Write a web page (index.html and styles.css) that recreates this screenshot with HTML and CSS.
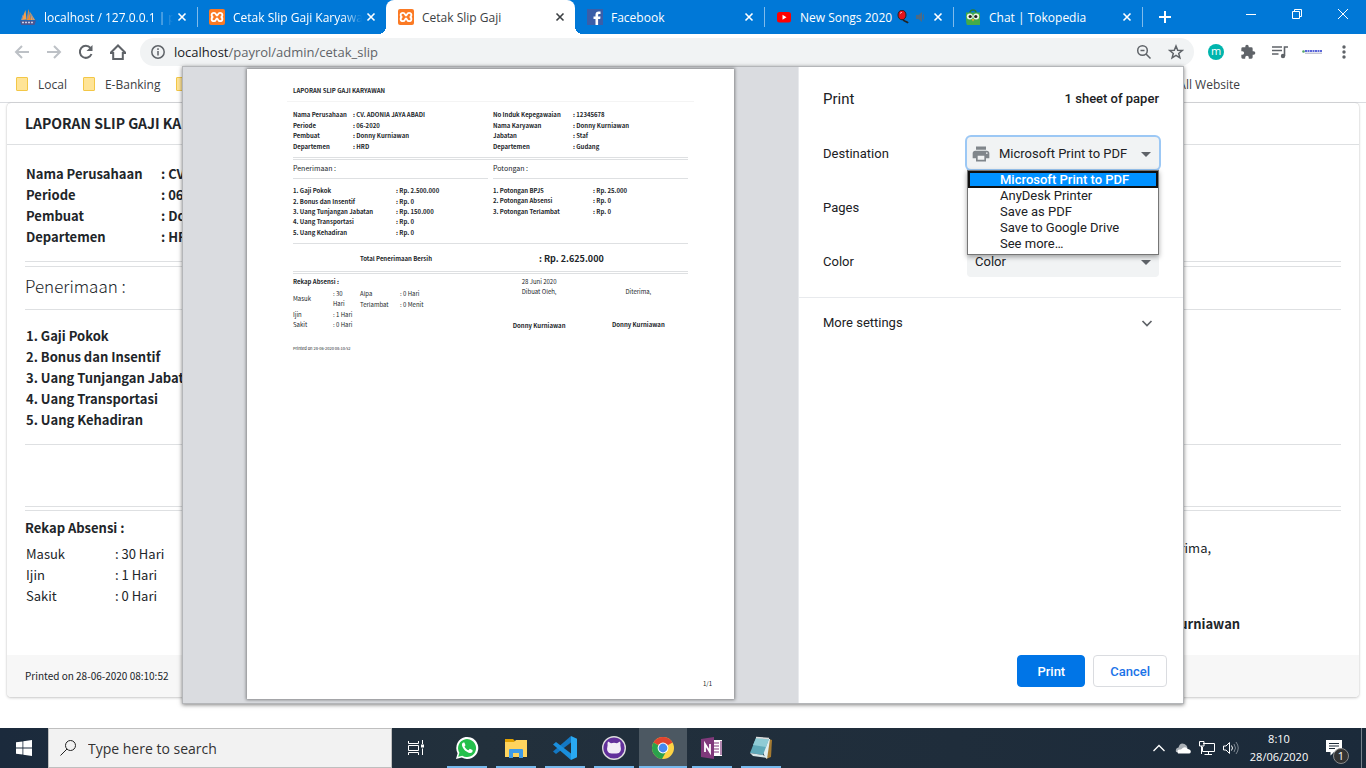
FILE: index.html
```
<!DOCTYPE html>
<html lang="id">
<head>
    <meta charset="UTF-8">
    <meta name="viewport" content="width=device-width, initial-scale=1.0">
    <title>Cetak Slip Gaji</title>
    <link rel="stylesheet" href="styles.css">
</head>
<body>
    <!-- Tabs -->
    <header class="tabstrip">
        <div class="tab">
            <svg class="favicon" viewBox="0 0 16 16"><path d="M5.500 1 L1.500 11 L6.500 10.500 Z" fill="#f7a04b"/><path d="M8.500 0 L6.500 11 L11 11 Z" fill="#f08b2c"/><path d="M10 3 L11 11 L15 11 Z" fill="#f7a04b"/><path d="M3 6 L1.500 11 M9 3 L7.500 10 M11.500 6 L13 11" stroke="#8b8fa8"/><path d="M0 11.500 H16 L14.500 16 H1 Z" fill="#4a5692"/><path d="M2 13.500 H14" stroke="#c8cde8" stroke-width="1.500" stroke-dasharray="2 1"/></svg>
            <span class="tab-title faded">localhost / 127.0.0.1 | phpMyAdmin</span>
            <button class="tab-close" aria-label="Close tab"><svg viewBox="0 0 10 10"><path d="M1.500 1.500 8.500 8.500M8.500 1.500 1.500 8.500"/></svg></button>
        </div>
        <div class="tab no-line">
            <svg class="favicon" viewBox="0 0 16 16"><rect width="16" height="16" rx="2" fill="#fb7a24"/><path d="M5 3.800C2 3.800 2 7.500 4.200 8 2 8.500 2 12.200 5 12.200 7.200 12.200 6.800 9.500 8 9.500S8.800 12.200 11 12.200C14 12.200 14 8.500 11.800 8 14 7.500 14 3.800 11 3.800 8.800 3.800 9.200 6.500 8 6.500S7.200 3.800 5 3.800Z" fill="none" stroke="#fff" stroke-width="1.800"/></svg>
            <span class="tab-title faded">Cetak Slip Gaji Karyawan</span>
            <button class="tab-close" aria-label="Close tab"><svg viewBox="0 0 10 10"><path d="M1.500 1.500 8.500 8.500M8.500 1.500 1.500 8.500"/></svg></button>
        </div>
        <div class="tab active no-line">
            <svg class="favicon" viewBox="0 0 16 16"><rect width="16" height="16" rx="2" fill="#fb7a24"/><path d="M5 3.800C2 3.800 2 7.500 4.200 8 2 8.500 2 12.200 5 12.200 7.200 12.200 6.800 9.500 8 9.500S8.800 12.200 11 12.200C14 12.200 14 8.500 11.800 8 14 7.500 14 3.800 11 3.800 8.800 3.800 9.200 6.500 8 6.500S7.200 3.800 5 3.800Z" fill="none" stroke="#fff" stroke-width="1.800"/></svg>
            <span class="tab-title">Cetak Slip Gaji</span>
            <button class="tab-close" aria-label="Close tab"><svg viewBox="0 0 10 10"><path d="M1.500 1.500 8.500 8.500M8.500 1.500 1.500 8.500"/></svg></button>
        </div>
        <div class="tab">
            <svg class="favicon" viewBox="0 0 16 16"><rect width="16" height="16" fill="#3b5ea8"/><path d="M8.500 16V10H6.500V7.500H8.500V5.800C8.500 3.500 9.800 2.500 11.700 2.500H13.500V4.900H12.300C11.300 4.900 11.100 5.300 11.100 6.100V7.500H13.500L13.200 10H11.100V16Z" fill="#fff"/></svg>
            <span class="tab-title">Facebook</span>
            <button class="tab-close" aria-label="Close tab"><svg viewBox="0 0 10 10"><path d="M1.500 1.500 8.500 8.500M8.500 1.500 1.500 8.500"/></svg></button>
        </div>
        <div class="tab">
            <svg class="favicon" viewBox="0 0 16 16"><rect x="1" y="3" width="14" height="10.500" rx="2.500" fill="#f00"/><path d="M6.500 5.800V10.700L10.500 8.200Z" fill="#fff"/></svg>
            <span class="tab-title">New Songs 2020
                <svg class="title-emoji" viewBox="0 0 14 14"><path d="M7 9C8 13 10 10 12 13" fill="none" stroke="#222" stroke-width="1.800"/><ellipse cx="6" cy="5" rx="4" ry="4.800" fill="#e3141c" stroke="#222"/><path d="M4.500 3.500 L5.500 2" stroke="#fff"/></svg>
                <svg class="title-emoji speaker" viewBox="0 0 14 14"><path d="M2 5H4.500L8 2V12L4.500 9H2Z" fill="#4d6a84"/><path d="M9.500 4.500V9.500M11.500 3.500V10.500" stroke="#4d6a84"/></svg>
            </span>
            <button class="tab-close" aria-label="Close tab"><svg viewBox="0 0 10 10"><path d="M1.500 1.500 8.500 8.500M8.500 1.500 1.500 8.500"/></svg></button>
        </div>
        <div class="tab">
            <svg class="favicon" viewBox="0 0 16 16"><path d="M5 4C5 0 11 0 11 4" fill="none" stroke="#287c37" stroke-width="1.500"/><path d="M1 3.500H15V16H2C1 14 1 12 1 3.500Z" fill="#43ab48"/><circle cx="4.800" cy="7.500" r="3" fill="#e9f4e5"/><circle cx="11.200" cy="7.500" r="3" fill="#e9f4e5"/><circle cx="5.200" cy="7.500" r="1.600" fill="#222"/><circle cx="10.800" cy="7.500" r="1.600" fill="#222"/><path d="M6.500 10H9.500L8 12.500Z" fill="#f5a623"/></svg>
            <span class="tab-title">Chat | Tokopedia</span>
            <button class="tab-close" aria-label="Close tab"><svg viewBox="0 0 10 10"><path d="M1.500 1.500 8.500 8.500M8.500 1.500 1.500 8.500"/></svg></button>
        </div>
        <button class="new-tab" aria-label="New tab"><svg viewBox="0 0 12 12"><path d="M6 0V12M0 6H12" stroke="#fff" stroke-width="2"/></svg></button>
        <div class="window-buttons">
            <button aria-label="Minimize"><svg viewBox="0 0 12 12"><path d="M1 6.500H11"/></svg></button>
            <button aria-label="Restore"><svg viewBox="0 0 12 12"><path d="M1.500 3.500H8.500V10.500H1.500ZM3.500 3.500V1.500H10.500V8.500H8.500"/></svg></button>
            <button aria-label="Close"><svg viewBox="0 0 12 12"><path d="M1 1 11 11M11 1 1 11"/></svg></button>
        </div>
    </header>

    <nav class="toolbar">
        <button class="nav-btn disabled" aria-label="Back"><svg viewBox="0 0 16 16"><path d="M15 8H2M8 2 2 8 8 14"/></svg></button>
        <button class="nav-btn disabled" aria-label="Forward"><svg viewBox="0 0 16 16"><path d="M1 8H14M8 2 14 8 8 14"/></svg></button>
        <button class="nav-btn" aria-label="Reload"><svg viewBox="0 0 16 16"><path d="M13.500 10A6 6 0 1 1 12.500 4"/><path d="M14.500 1V7H8.500Z" fill="#5f6368" stroke="none"/></svg></button>
        <button class="nav-btn" aria-label="Home"><svg viewBox="0 0 16 16"><path d="M0.500 9 8 1.500 15.500 9H12.800V15H3.200V9Z"/></svg></button>
        <div class="omnibox">
            <svg class="small-icon" viewBox="0 0 16 16"><circle cx="8" cy="8" r="6.200"/><path d="M8 7V11.500M8 4.300V6"/></svg>
            <div class="url"><span class="host">localhost</span>/payrol/admin/cetak_slip</div>
            <button class="icon-btn" aria-label="Zoom"><svg class="small-icon" viewBox="0 0 16 16"><circle cx="6.500" cy="6.500" r="4.800"/><path d="M10 10 14.500 14.500M4.500 6.500H8.500"/></svg></button>
            <button class="icon-btn" aria-label="Bookmark this page"><svg class="small-icon" viewBox="0 0 16 16"><path d="M8 2 9.700 6.200 14.200 6.500 10.700 9.400 11.900 13.800 8 11.400 4.100 13.800 5.300 9.400 1.800 6.500 6.300 6.200Z"/></svg></button>
        </div>
        <div class="extensions">
            <button class="ext" aria-label="Mercury"><span class="avatar">m</span></button>
            <button class="ext" aria-label="Extensions"><svg viewBox="0 0 24 24"><path fill="#5f6368" d="M20.500 11H19V7a2 2 0 0 0-2-2h-4V3.500a2.500 2.500 0 0 0-5 0V5H4a2 2 0 0 0-2 2v3.800h1.500a2.700 2.700 0 0 1 0 5.400H2V20a2 2 0 0 0 2 2h3.800v-1.500a2.700 2.700 0 0 1 5.400 0V22H17a2 2 0 0 0 2-2v-4h1.500a2.500 2.500 0 0 0 0-5z"/></svg></button>
            <button class="ext" aria-label="Media controls"><svg viewBox="0 0 16 16"><path d="M0 3H10M0 6.500H10M0 10H6.500M12.500 12V3H16" fill="none" stroke="#5f6368" stroke-width="1.600"/><circle cx="11" cy="12" r="2.200" fill="#5f6368"/></svg></button>
            <button class="ext wide" aria-label="Profile"><svg viewBox="0 0 20 6"><path d="M3 2H20" stroke="#5a66d8" stroke-width="2" stroke-dasharray="2 0.500"/><path d="M3 4.200H20" stroke="#a9abc2"/><circle cx="1.500" cy="2.500" r="1.300" fill="#57a66a"/></svg></button>
            <button class="ext" aria-label="Menu"><svg viewBox="0 0 16 16"><g fill="#5f6368"><circle cx="8" cy="3" r="1.700"/><circle cx="8" cy="8" r="1.700"/><circle cx="8" cy="13" r="1.700"/></g></svg></button>
        </div>
    </nav>

    <nav class="bookmarks">
        <a href="#"><span class="folder"></span>Local</a>
        <a href="#"><span class="folder"></span>E-Banking</a>
        <a href="#"><span class="folder"></span></a>
        <a href="#" class="last">All Website</a>
    </nav>

    <!-- Payslip page -->
    <main class="page">
        <section class="card">
            <h1 class="card-header">LAPORAN SLIP GAJI KARYAWAN</h1>
            <div class="card-body">
                <table class="info">
                    <tr><th>Nama Perusahaan</th><td>: CV. ADONIA JAYA ABADI</td></tr>
                    <tr><th>Periode</th><td>: 06-2020</td></tr>
                    <tr><th>Pembuat</th><td>: Donny Kurniawan</td></tr>
                    <tr><th>Departemen</th><td>: HRD</td></tr>
                </table>
                <div class="double-line"></div>
                <h2>Penerimaan :</h2>
                <ol class="items">
                    <li>Gaji Pokok</li>
                    <li>Bonus dan Insentif</li>
                    <li>Uang Tunjangan Jabatan</li>
                    <li>Uang Transportasi</li>
                    <li>Uang Kehadiran</li>
                </ol>
                <div class="total-row"></div>
                <div class="recap">
                    <div>
                        <h3>Rekap Absensi :</h3>
                        <table class="attendance">
                            <tr><td>Masuk</td><td>: 30 Hari</td></tr>
                            <tr><td>Ijin</td><td>: 1 Hari</td></tr>
                            <tr><td>Sakit</td><td>: 0 Hari</td></tr>
                        </table>
                    </div>
                    <div class="receiver">
                        <span>Diterima,</span>
                        <b>Donny Kurniawan</b>
                    </div>
                </div>
            </div>
            <footer class="card-footer">Printed on 28-06-2020 08:10:52</footer>
        </section>
    </main>

    <!-- Print dialog -->
    <div class="overlay">
        <div class="dialog" role="dialog" aria-label="Print">
            <div class="preview">
                <article class="paper">
                    <h2 class="paper-title">LAPORAN SLIP GAJI KARYAWAN</h2>
                    <div class="paper-body">
                        <div class="halves">
                            <table class="rows four">
                                <tr><th>Nama Perusahaan</th><td>: CV. ADONIA JAYA ABADI</td></tr>
                                <tr><th>Periode</th><td>: 06-2020</td></tr>
                                <tr><th>Pembuat</th><td>: Donny Kurniawan</td></tr>
                                <tr><th>Departemen</th><td>: HRD</td></tr>
                            </table>
                            <table class="rows four employee">
                                <tr><th>No Induk Kepegawaian</th><td>: 12345678</td></tr>
                                <tr><th>Nama Karyawan</th><td>: Donny Kurniawan</td></tr>
                                <tr><th>Jabatan</th><td>: Staf</td></tr>
                                <tr><th>Departemen</th><td>: Gudang</td></tr>
                            </table>
                        </div>
                        <div class="paper-double"></div>
                        <div class="halves amounts">
                            <div>
                                <h3>Penerimaan :</h3>
                                <table class="rows five income">
                                    <tr><th>1. Gaji Pokok</th><td>: Rp. 2.500.000</td></tr>
                                    <tr><th>2. Bonus dan Insentif</th><td>: Rp. 0</td></tr>
                                    <tr><th>3. Uang Tunjangan Jabatan</th><td>: Rp. 150.000</td></tr>
                                    <tr><th>4. Uang Transportasi</th><td>: Rp. 0</td></tr>
                                    <tr><th>5. Uang Kehadiran</th><td>: Rp. 0</td></tr>
                                </table>
                            </div>
                            <div>
                                <h3>Potongan :</h3>
                                <table class="rows three cuts">
                                    <tr><th>1. Potongan BPJS</th><td>: Rp. 25.000</td></tr>
                                    <tr><th>2. Potongan Absensi</th><td>: Rp. 0</td></tr>
                                    <tr><th>3. Potongan Terlambat</th><td>: Rp. 0</td></tr>
                                </table>
                            </div>
                        </div>
                        <div class="paper-total">
                            <b>Total Penerimaan Bersih</b>
                            <strong>: Rp. 2.625.000</strong>
                        </div>
                        <div class="paper-double"></div>
                        <div class="paper-recap">
                            <div class="absence">
                                <h4>Rekap Absensi :</h4>
                                <div class="absence-tables">
                                    <table>
                                        <tr><td>Masuk</td><td>: 30<br>Hari</td></tr>
                                        <tr><td>Ijin</td><td>: 1 Hari</td></tr>
                                        <tr><td>Sakit</td><td>: 0 Hari</td></tr>
                                    </table>
                                    <table>
                                        <tr><td>Alpa</td><td>: 0 Hari</td></tr>
                                        <tr><td>Terlambat</td><td>: 0 Menit</td></tr>
                                    </table>
                                </div>
                            </div>
                            <div class="sign"><span>28 Juni 2020<br>Dibuat Oleh,</span><b>Donny Kurniawan</b></div>
                            <div class="sign second"><span>Diterima,</span><b>Donny Kurniawan</b></div>
                        </div>
                        <p class="printed">Printed on 28-06-2020 08:10:52</p>
                    </div>
                    <span class="page-number">1/1</span>
                </article>
            </div>

            <form class="settings">
                <div class="settings-head">
                    <h2>Print</h2>
                    <span>1 sheet of paper</span>
                </div>
                <div class="setting">
                    <label for="destination">Destination</label>
                    <div class="select-box focused">
                        <svg class="printer" viewBox="0 0 24 24"><path fill="#80868b" d="M19 8H5c-1.660 0-3 1.340-3 3v6h4v4h12v-4h4v-6c0-1.660-1.340-3-3-3zm-3 11H8v-5h8v5zm3-7c-.550 0-1-.450-1-1s.450-1 1-1 1 .450 1 1-.450 1-1 1zM18 3H6v4h12V3z"/></svg>
                        <select id="destination" class="with-icon">
                            <option>Microsoft Print to PDF</option>
                        </select>
                        <ul class="menu" role="listbox">
                            <li class="selected" role="option">Microsoft Print to PDF</li>
                            <li role="option">AnyDesk Printer</li>
                            <li role="option">Save as PDF</li>
                            <li role="option">Save to Google Drive</li>
                            <li role="option">See more…</li>
                        </ul>
                    </div>
                </div>
                <div class="setting">
                    <label for="pages">Pages</label>
                    <div class="select-box"><select id="pages"><option>All</option></select></div>
                </div>
                <div class="setting">
                    <label for="color">Color</label>
                    <div class="select-box"><select id="color"><option>Color</option></select></div>
                </div>
                <button type="button" class="more">More settings
                    <svg viewBox="0 0 12 12"><path d="M1.500 4 6 8.500 10.500 4" fill="none" stroke="#5f6368" stroke-width="1.700"/></svg>
                </button>
                <div class="actions">
                    <button type="button" class="btn primary">Print</button>
                    <button type="button" class="btn">Cancel</button>
                </div>
            </form>
        </div>
    </div>

    <!-- Windows taskbar -->
    <footer class="taskbar">
        <button class="start" aria-label="Start"><svg viewBox="0 0 16 16"><path fill="#fff" d="M0 2.300 6.500 1.400V7.600H0ZM7.300 1.300 16 0V7.600H7.300ZM0 8.400H6.500V14.600L0 13.700ZM7.300 8.400H16V16L7.300 14.700Z"/></svg></button>
        <label class="search">
            <svg viewBox="0 0 16 16"><circle cx="10.500" cy="5.500" r="5"/><path d="M7 9 0.500 15.500"/></svg>
            <input type="text" placeholder="Type here to search">
        </label>
        <button class="task-view" aria-label="Task view"><svg viewBox="0 0 16 16"><path d="M0.500 1V3.500H10.500V1M0.500 15V12.500H10.500V15M0.500 5.500H10.500V10.500H0.500ZM14.500 0V4M14.500 8.500V15" fill="none" stroke="#fff"/><path d="M13 4.500H16V7.500H13Z" fill="#fff"/></svg></button>
        <div class="apps">
            <button class="app" aria-label="WhatsApp"><svg viewBox="0 0 24 24"><path d="M1 23 2.600 17.200A11 11 0 1 1 6.800 21.500Z" fill="#fff"/><path d="M3.200 20.800 4.400 16.800A9 9 0 1 1 7.300 19.700Z" fill="#25c04c"/><path fill="#fff" d="M8.500 6.500c-.6 0-2 1-1.500 3 .8 3.500 4.500 7 8 7.500 2 0 3-1.300 2.500-3l-2.700-1.300-1.300 1.500c-1.900-.7-3.200-2-4-3.800l1-1.200-1.100-2.700z"/></svg></button>
            <button class="app" aria-label="File Explorer"><svg viewBox="0 0 24 24"><path d="M1 3H9L11 5V8H1Z" fill="#e2a100"/><path d="M1 6H10L12 4H23V21H1Z" fill="#ffd45e"/><path d="M5 22V14Q5 13 6 13H18Q19 13 19 14V22H15V17H9V22Z" fill="#3f9be8"/></svg></button>
            <button class="app" aria-label="Visual Studio Code"><svg viewBox="0 0 24 24"><path d="M18 0 24 2.800V21.200L18 24Z" fill="#29a9f2"/><path d="M18 0V6.500L3 18 0 15.500Z" fill="#1378c4"/><path d="M0 8.500 3 6 18 17.500V24Z" fill="#1a8fdd"/></svg></button>
            <button class="app" aria-label="GitHub Desktop"><svg viewBox="0 0 24 24"><circle cx="12" cy="12" r="11.300" fill="#62309b" stroke="#ddd" stroke-width="1.400"/><path fill="#f2edf7" d="M6 5.500 9 7.200Q12 6.500 15 7.200L18 5.500Q18.800 7.500 18.400 9.200 20.500 17.500 14.500 17.500H9.500Q3.500 17.500 5.600 9.200 5.200 7.500 6 5.500Z"/></svg></button>
            <button class="app current" aria-label="Google Chrome"><svg viewBox="0 0 24 24"><circle cx="12" cy="12" r="11" fill="#fdd344"/><path d="M12 12 2.470 6.500A11 11 0 0 1 21.530 6.500Z" fill="#e0432f"/><path d="M12 6.500H21.500L17 7Z" fill="#e0432f"/><path d="M12 12 2.470 6.500A11 11 0 0 0 11 23L16 14Z" fill="#2ba24c"/><circle cx="12" cy="12" r="5.400" fill="#fff"/><circle cx="12" cy="12" r="4.400" fill="#4688f1"/></svg></button>
            <button class="app" aria-label="OneNote"><svg viewBox="0 0 24 24"><path d="M12 4H22V20H12Z" fill="#fff"/><path d="M14 7H19M14 10H19M14 13H19M14 16H19M21 5V19" stroke="#80397b" stroke-width="1.200"/><path d="M1 3 14 1V23L1 21Z" fill="#80397b"/><path d="M5 16V8L10 16V8" fill="none" stroke="#fff" stroke-width="1.800"/></svg></button>
            <button class="app" aria-label="Notepad"><svg viewBox="0 0 24 24"><path d="M20 3 23 4 22 21 17 23Z" fill="#a57b32"/><path d="M8 2 21 3 18 23 16 21Z" fill="#e2eef0"/><path d="M7 2 20 3 14 19 1 17Z" fill="#5fa9b9"/><path d="M7 2 20 3 17 11 4 9Z" fill="#8fcbd5"/><path d="M1 17 14 19 19 22 4 20Z" fill="#d8e6e8"/><path d="M7 1.500 20 2.500" stroke="#ddd" stroke-width="1.500"/></svg></button>
        </div>
        <div class="tray">
            <svg viewBox="0 0 16 16"><path d="M2.500 11 8 5.500 13.500 11" fill="none" stroke="#fff" stroke-width="1.300"/></svg>
            <svg viewBox="0 0 16 16"><path d="M1 12Q0 8 3.500 7.500 5 2 9.500 4 12 5 12.500 7.500L6 13Z" fill="#aab0b6"/><path d="M3 13.500Q1 9 6 9.500 10 5.500 13 9 16 9.500 15.800 12 15.500 13.500 14 13.500Z" fill="#fff"/></svg>
            <svg viewBox="0 0 16 16"><path d="M4 3.500H15.500V11.500H3.500V7M9.500 11.500V14.500M5.500 14.500H13M0.500 1.500H5V6H0.500ZM2.500 6V14" fill="none" stroke="#fff"/></svg>
            <svg viewBox="0 0 16 16"><path d="M0.500 6V10H3L6.500 13.500V2.500L3 6Z" fill="none" stroke="#fff"/><path d="M8.500 5.500Q10.500 8 8.500 10.500" fill="none" stroke="#fff"/><path d="M11 4Q14 8 11 12M13 2Q17.500 8 13 14" fill="none" stroke="#7d8791"/></svg>
        </div>
        <div class="clock"><span>8:10</span><span>28/06/2020</span></div>
        <button class="notify" aria-label="Notifications">
            <svg viewBox="0 0 16 16"><path d="M0 0H16V12H8L4.500 15.500V12H0Z" fill="#fff"/><path d="M3 3.500H13M3 6H13M3 8.500H9" stroke="#1d2b38"/></svg>
            <span class="badge">1</span>
        </button>
    </footer>
</body>
</html>
```
FILE: styles.css
```
:root {
    --chrome-blue: #0078d7;
    --icon-gray: #5f6368;
    --line: #dee0e2;
    --text: #212529;
    --ui-font: "Open Sans", "Noto Sans", sans-serif;
    --slip-font: "Noto Sans CJK SC", "Open Sans", sans-serif;
    --dialog-font: Roboto, "Liberation Sans", sans-serif;
}

* {
    box-sizing: border-box;
}

body {
    margin: 0;
    height: 100vh;
    display: flex;
    flex-direction: column;
    overflow: hidden;
    position: relative;
    background: #fff;
    color: var(--text);
    font-family: var(--ui-font);
    font-size: 12px;
}

button {
    border: none;
    background: none;
    padding: 0;
    font-family: inherit;
    cursor: pointer;
}

h1, h2, h3, h4, p, ul, ol {
    margin: 0;
    padding: 0;
}

svg {
    display: block;
    flex: none;
}

table {
    border-collapse: collapse;
}

th, td {
    padding: 0;
    text-align: left;
    white-space: nowrap;
}

/* Tabs */
.tabstrip {
    display: flex;
    flex: none;
    height: 34px;
    padding-left: 8px;
    background: var(--chrome-blue);
    color: #fff;
}

.tab {
    display: flex;
    align-items: center;
    flex: 0 1 189px;
    min-width: 0;
    gap: 8px;
    padding: 0 10px 0 12px;
    position: relative;
}

.tab::after {
    content: "";
    position: absolute;
    right: -1px;
    top: 7px;
    width: 1px;
    height: 20px;
    background: #80bbeb;
}

.tab.no-line::after {
    display: none;
}

.tab.active {
    background: #fff;
    color: #3c4043;
    border-radius: 8px 8px 0 0;
}

.tab.active::before,
.tab.active::after {
    content: "";
    display: block;
    position: absolute;
    top: auto;
    bottom: 0;
    width: 8px;
    height: 8px;
}

.tab.active::before {
    left: -8px;
    background: radial-gradient(circle at 0 0, var(--chrome-blue) 8px, #fff 8px);
}

.tab.active::after {
    right: -8px;
    background: radial-gradient(circle at 100% 0, var(--chrome-blue) 8px, #fff 8px);
}

.favicon {
    width: 16px;
    height: 16px;
}

.tab-title {
    display: flex;
    align-items: center;
    flex: 1;
    min-width: 0;
    overflow: hidden;
    white-space: nowrap;
}

.tab-title.faded {
    display: block;
    margin-right: -4px;
    -webkit-mask-image: linear-gradient(to right, #000 85%, transparent);
    mask-image: linear-gradient(to right, #000 85%, transparent);
}

.title-emoji {
    width: 14px;
    height: 14px;
    margin-left: 4px;
}

.tab-close {
    color: inherit;
}

.tab-close svg {
    width: 10px;
    height: 10px;
    stroke: currentColor;
    stroke-width: 1.6;
}

.new-tab {
    width: 46px;
    display: flex;
    align-items: center;
    justify-content: center;
}

.new-tab svg {
    width: 12px;
    height: 12px;
}

.window-buttons {
    display: flex;
    margin-left: auto;
}

.window-buttons button {
    width: 46px;
    height: 28px;
    display: flex;
    align-items: center;
    justify-content: center;
}

.window-buttons svg {
    width: 12px;
    height: 12px;
    fill: none;
    stroke: #fff;
}

/* Address bar */
.toolbar {
    display: flex;
    align-items: center;
    flex: none;
    height: 36px;
    padding: 0 14px;
}

.nav-btn {
    width: 32px;
    display: flex;
}

.nav-btn svg {
    width: 16px;
    height: 16px;
    fill: none;
    stroke: var(--icon-gray);
    stroke-width: 2;
}

.nav-btn.disabled svg {
    stroke: #bdc1c6;
}

.omnibox {
    flex: 1;
    display: flex;
    align-items: center;
    gap: 8px;
    height: 28px;
    padding: 0 10px;
    margin-left: -2px;
    border-radius: 14px;
    background: #f1f3f4;
}

.small-icon {
    width: 16px;
    height: 16px;
    fill: none;
    stroke: var(--icon-gray);
    stroke-width: 1.5;
}

.url {
    flex: 1;
    color: #5f6368;
    font-size: 13px;
}

.host {
    color: #202124;
}

.icon-btn + .icon-btn {
    margin-left: 8px;
}

.extensions {
    display: flex;
    gap: 16px;
    margin-left: 14px;
}

.ext {
    width: 16px;
    height: 16px;
    display: flex;
    align-items: center;
    justify-content: center;
}

.ext svg {
    width: 16px;
    height: 16px;
}

.ext.wide svg {
    width: 20px;
    height: 6px;
}

.avatar {
    flex: none;
    width: 16px;
    height: 16px;
    border-radius: 50%;
    background: #00b5ad;
    color: #fff;
    font-size: 11px;
    line-height: 14px;
}

/* Bookmarks */
.bookmarks {
    display: flex;
    flex: none;
    gap: 16px;
    height: 33px;
    padding: 0 126px 4px 16px;
    border-bottom: 1px solid #dadce0;
}

.bookmarks a {
    display: flex;
    align-items: center;
    gap: 10px;
    color: #3c4043;
    text-decoration: none;
}

.bookmarks .last {
    margin-left: auto;
}

.folder {
    width: 12px;
    height: 14px;
    border: 1px solid #f3c747;
    border-radius: 1px;
    background: #ffe497;
}

/* Payslip page */
.page {
    flex: 1;
    min-height: 0;
    padding: 0 7px 31px;
    font-family: var(--slip-font);
    font-size: 13px;
    line-height: 21px;
}

.card {
    display: flex;
    flex-direction: column;
    height: 100%;
    border-radius: 4px;
    box-shadow: 0 0 1px rgba(0, 0, 0, 0.25), 0 1px 3px rgba(0, 0, 0, 0.2);
    overflow: hidden;
}

.card-header {
    flex: none;
    height: 42px;
    padding: 0 18px;
    border-bottom: 1px solid var(--line);
    font-size: 14px;
    font-weight: bold;
    line-height: 40px;
}

.card-body {
    flex: 1;
    padding: 18px 18px 0;
}

.info {
    margin-left: 1px;
}

.info th {
    width: 135px;
}

.info td {
    font-weight: bold;
}

.double-line {
    height: 6px;
    margin-top: 14px;
    border: 1px solid var(--line);
    border-width: 1px 0;
}

.card h2 {
    height: 43px;
    padding-top: 8px;
    border-bottom: 1px solid var(--line);
    font-size: 17px;
    font-weight: 300;
}

.items {
    height: 135px;
    padding: 15px 0 0 1px;
    border-bottom: 1px solid var(--line);
    counter-reset: item;
    list-style: none;
    font-weight: bold;
}

.items li::before {
    counter-increment: item;
    content: counter(item) ". ";
}

.total-row {
    height: 66px;
    border-bottom: 1px solid var(--line);
    background: linear-gradient(var(--line), var(--line)) 0 61px / 100% 1px no-repeat;
}

.recap {
    display: flex;
    justify-content: space-between;
    padding-top: 6px;
}

.card h3 {
    margin-bottom: 5px;
    font-size: 13px;
}

.attendance {
    margin-left: 1px;
}

.attendance td:first-child {
    width: 89px;
}

.receiver {
    width: 24%;
    display: flex;
    flex-direction: column;
    align-items: center;
    justify-content: space-between;
    height: 97px;
    margin-top: 20px;
}

.card-footer {
    flex: none;
    height: 42px;
    padding: 0 18px;
    background: #f7f7f7;
    font-size: 10px;
    line-height: 42px;
}

/* Print dialog */
.overlay {
    position: absolute;
    inset: 66px 0 64px;
    display: flex;
    justify-content: center;
}

.dialog {
    display: flex;
    width: 100%;
    max-width: 1002px;
    border: 1px solid #b4b6b9;
    background: #fff;
    box-shadow: 0 1px 4px rgba(0, 0, 0, 0.5);
}

.preview {
    flex: 1;
    display: flex;
    justify-content: center;
    padding: 2px 0 4px;
    background: #dadce0;
    border-right: 1px solid #e8eaed;
}

.paper {
    display: flex;
    flex-direction: column;
    width: 487px;
    padding: 17px 40px 10px;
    background: #fff;
    box-shadow: 0 0 3px 1px rgba(0, 0, 0, 0.4);
    font-family: var(--slip-font);
    font-size: 6px;
    line-height: 10px;
}

.paper-title {
    height: 16px;
    padding-left: 6px;
    border-bottom: 1px solid #f4f4f4;
    font-size: 6px;
}

.paper-body {
    flex: 1;
    padding: 8px 6px 0;
}

.halves {
    display: grid;
    grid-template-columns: 1fr 1fr;
    column-gap: 5px;
    align-items: start;
}

.rows td {
    font-weight: bold;
}

.rows th {
    width: 60px;
}

.employee th {
    width: 80px;
}

.income th {
    width: 103px;
}

.cuts th {
    width: 100px;
}

.four {
    height: 42px;
}

.five {
    height: 52px;
}

.three {
    height: 31px;
}

.paper-double {
    height: 3px;
    margin-top: 5px;
    border: 1px solid var(--line);
    border-width: 1px 0;
}

.amounts {
    height: 84px;
    border-bottom: 1px solid var(--line);
}

.paper h3 {
    height: 19px;
    margin-bottom: 7px;
    border-bottom: 1px solid var(--line);
    font-size: 7px;
    font-weight: 400;
    line-height: 16px;
}

.paper-total {
    display: grid;
    grid-template-columns: 246px 1fr;
    align-items: center;
    height: 22px;
    padding-top: 7px;
}

.paper-total b {
    padding-left: 67px;
}

.paper-total strong {
    font-size: 9px;
}

.paper-recap {
    display: flex;
    height: 58px;
    padding-top: 3px;
}

.absence {
    width: 198px;
}

.paper h4 {
    margin-bottom: 2px;
    font-size: 6px;
}

.absence-tables {
    display: flex;
    align-items: flex-start;
}

.absence-tables td:first-child {
    width: 40px;
}

.absence-tables table:first-child {
    width: 67px;
    height: 41px;
}

.absence-tables table:last-child {
    height: 21px;
}

.sign {
    display: flex;
    flex-direction: column;
    align-items: center;
    justify-content: space-between;
    width: 100px;
    height: 54px;
}

.sign.second {
    height: 43px;
    margin-top: 10px;
}

.printed {
    margin-top: 12px;
    font-size: 4px;
    line-height: 8px;
}

.page-number {
    align-self: flex-end;
    margin-right: -18px;
}

.settings {
    display: flex;
    flex-direction: column;
    width: 384px;
    font-family: var(--dialog-font);
    font-size: 13px;
    color: #202124;
}

.settings-head {
    display: flex;
    align-items: center;
    justify-content: space-between;
    height: 59px;
    padding: 4px 24px 0;
    font-weight: 500;
}

.settings-head h2 {
    font-size: 15px;
    font-weight: 400;
}

.setting {
    display: flex;
    align-items: center;
    justify-content: space-between;
    height: 54px;
    padding: 0 24px;
}

.select-box {
    width: 192px;
    height: 32px;
    border-radius: 4px;
    background: #f1f3f4;
    position: relative;
}

.select-box.focused {
    box-shadow: 0 0 0 2px #9cc8f5;
}

.select-box select {
    appearance: none;
    width: 100%;
    height: 32px;
    padding: 0 8px;
    border: none;
    background: none;
    color: #202124;
    font-family: inherit;
    font-size: 13px;
}

.select-box select.with-icon {
    padding-left: 32px;
}

.select-box::after {
    content: "";
    position: absolute;
    right: 8px;
    top: 15px;
    border: 5px solid transparent;
    border-top-color: var(--icon-gray);
    border-bottom: none;
}

.printer {
    position: absolute;
    left: 4px;
    top: 7px;
    width: 20px;
    height: 20px;
}

.menu {
    position: absolute;
    z-index: 2;
    top: 33px;
    left: 0;
    right: 0;
    padding-bottom: 2px;
    border: 1px solid #767676;
    background: #fff;
    box-shadow: 0 2px 5px rgba(0, 0, 0, 0.35);
    list-style: none;
}

.menu li {
    padding-left: 32px;
    line-height: 16px;
}

.menu .selected {
    padding-left: 30px;
    border: 2px solid #101010;
    background: #0091ff;
    color: #fff;
    font-weight: 500;
    line-height: 13px;
}

.more {
    display: flex;
    align-items: center;
    justify-content: space-between;
    height: 50px;
    margin-top: 9px;
    padding: 0 30px 0 24px;
    border-top: 1px solid #e8eaed;
    color: #202124;
    font-size: 13px;
}

.more svg {
    width: 12px;
    height: 12px;
}

.actions {
    display: flex;
    justify-content: flex-end;
    gap: 8px;
    margin-top: auto;
    padding: 16px;
}

.btn {
    height: 32px;
    padding: 0 16px;
    border: 1px solid #dadce0;
    border-radius: 4px;
    color: #1a73e8;
    font-size: 13px;
    font-weight: 500;
}

.btn.primary {
    padding: 0 19px;
    border-color: #0075e7;
    background: #0075e7;
    color: #fff;
}

/* Taskbar */
.taskbar {
    display: flex;
    flex: none;
    height: 40px;
    background: linear-gradient(to right, #1b2a3c, #22303c 35%, #1f2d3b 70%, #1b2a3a);
    color: #fff;
}

.start,
.task-view {
    width: 48px;
    display: flex;
    align-items: center;
    justify-content: center;
}

.start svg,
.task-view svg {
    width: 16px;
    height: 16px;
}

.search {
    display: flex;
    align-items: center;
    gap: 10px;
    width: 344px;
    padding: 0 11px;
    border: 1px solid #bfbfbf;
    background: #f2f2f2;
}

.search svg {
    width: 16px;
    height: 16px;
    fill: none;
    stroke: #222;
}

.search input {
    flex: 1;
    min-width: 0;
    border: none;
    background: none;
    font-family: inherit;
    font-size: 14px;
}

.search input::placeholder {
    color: #333;
}

.apps {
    display: flex;
    gap: 1px;
    margin-left: 3px;
}

.app {
    width: 48px;
    display: flex;
    align-items: center;
    justify-content: center;
    background: linear-gradient(#76b9ed, #76b9ed) 50% 100% / 40px 2px no-repeat;
}

.app.current {
    background-color: #4c5862;
    background-size: 48px 2px;
}

.app svg {
    width: 24px;
    height: 24px;
}

.tray {
    display: flex;
    align-items: center;
    gap: 8px;
    margin-left: auto;
}

.tray svg {
    width: 16px;
    height: 16px;
}

.clock {
    display: flex;
    flex-direction: column;
    align-items: center;
    justify-content: center;
    width: 60px;
    margin-left: 10px;
    font-size: 11px;
    line-height: 18px;
}

.notify {
    display: flex;
    align-items: center;
    width: 53px;
    margin-right: 4px;
    padding-left: 17px;
    border-right: 1px solid #77818b;
    position: relative;
}

.notify svg {
    width: 16px;
    height: 16px;
}

.badge {
    position: absolute;
    left: 24px;
    bottom: 4px;
    width: 16px;
    height: 16px;
    border: 1px solid #8b8b8b;
    border-radius: 50%;
    background: #333;
    color: #fff;
    font-size: 11px;
    line-height: 14px;
}
```
